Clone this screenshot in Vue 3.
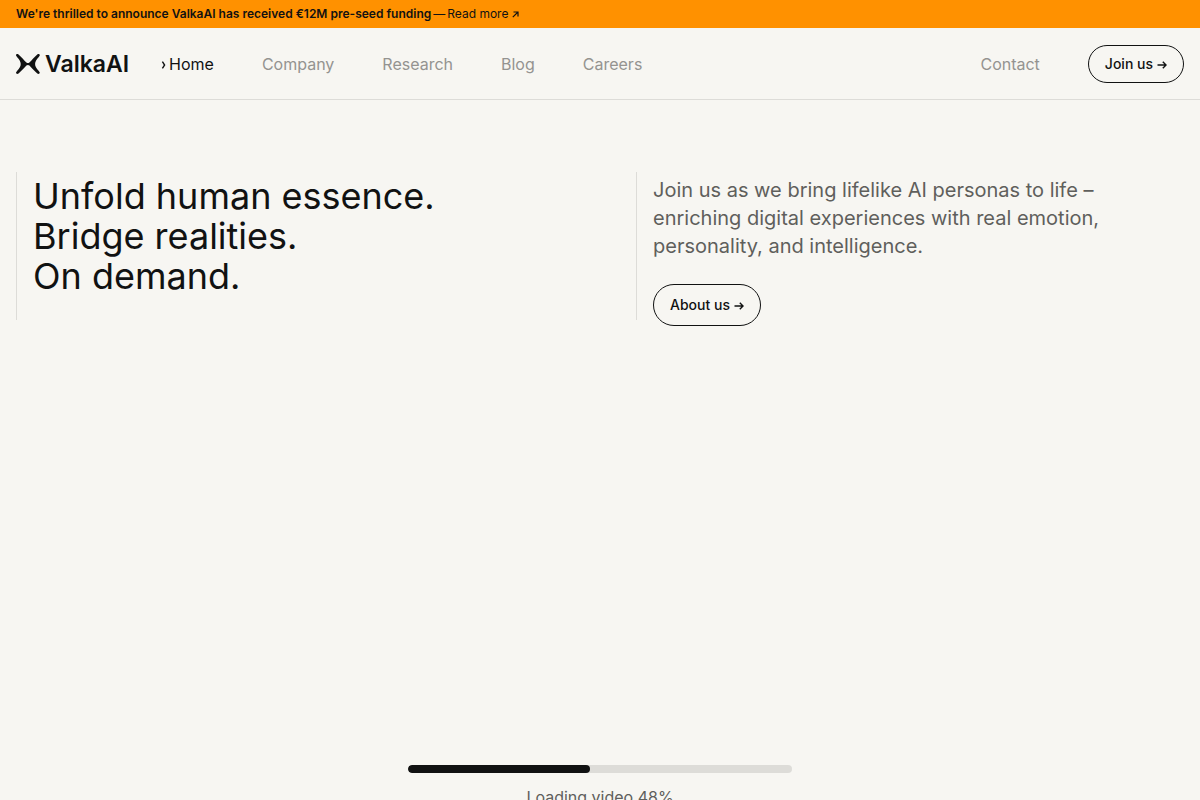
<script setup>
const links = [
  { label: 'Home', current: true },
  { label: 'Company' },
  { label: 'Research' },
  { label: 'Blog' },
  { label: 'Careers' },
]
const progress = 47.5
</script>

<template>
  <div class="page">
    <aside class="banner">
      <strong>We're thrilled to announce ValkaAI has received €12M pre-seed funding</strong>
      <span class="dash">—</span>
      <a href="#news">Read more
        <svg class="diag" viewBox="0 0 7 7" aria-hidden="true"><path d="M.8 6.2 6 1M1.5 1H6v4.5" /></svg>
      </a>
    </aside>

    <header class="header">
      <a class="logo" href="#home" aria-label="ValkaAI">
        <svg class="mark" viewBox="0 0 24 20" aria-hidden="true">
          <path d="M0 1.4C0 .1 1.4 -.4 2.5.5C5.4 3 8 6.2 10.4 8.6Q11.9 9.6 13.4 8.6C15.8 6.2 18.4 3 21.3.5C22.4-.4 23.8.1 23.8 1.4L22.6 3.2C17.9 8 17.9 12 22.6 16.8L23.8 18.6C23.8 19.9 22.4 20.4 21.3 19.5C18.4 17 15.8 13.8 13.4 11.4Q11.9 10.4 10.4 11.4C8 13.8 5.4 17 2.5 19.5C1.4 20.4 0 19.9 0 18.6L1.2 16.8C5.9 12 5.9 8 1.2 3.2Z" />
        </svg>
        <span>ValkaAI</span>
      </a>
      <nav class="nav" aria-label="Main">
        <a v-for="link in links" :key="link.label" :href="'#' + link.label.toLowerCase()" :class="{ current: link.current }">
          <svg v-if="link.current" class="chevron" viewBox="0 0 5 8" aria-hidden="true"><path d="M1.4.6 3.6 4 1.4 7.4" /></svg>{{ link.label }}
        </a>
      </nav>
      <a class="contact" href="#contact">Contact</a>
      <button class="pill small" type="button">
        Join us
        <svg class="arrow" viewBox="0 0 10 8" aria-hidden="true"><path d="M.5 4H9M5.8.8 9 4 5.8 7.2" /></svg>
      </button>
    </header>

    <main>
      <section class="hero">
        <div class="column">
          <h1>Unfold human essence.<br />Bridge realities.<br />On demand.</h1>
        </div>
        <div class="column">
          <p>Join us as we bring lifelike AI personas to life –<br />enriching digital experiences with real emotion,<br />personality, and intelligence.</p>
          <button class="pill" type="button">
            About us
            <svg class="arrow" viewBox="0 0 10 8" aria-hidden="true"><path d="M.5 4H9M5.8.8 9 4 5.8 7.2" /></svg>
          </button>
        </div>
      </section>

      <section class="video" aria-label="Video">
        <div class="loader">
          <div class="track" role="progressbar" aria-label="Loading video" :aria-valuenow="progress" aria-valuemin="0" aria-valuemax="100">
            <div class="fill" :style="{ width: progress + '%' }"></div>
          </div>
          <div class="status">Loading video {{ Math.round(progress) }}%</div>
        </div>
      </section>
    </main>
  </div>
</template>

<style>
html, body { background: #f7f6f2; }
</style>

<style scoped>
* { box-sizing: border-box; }
.page {
  height: 100vh;
  overflow: hidden;
  background: #f7f6f2;
  color: #111212;
  font-family: Inter, "Liberation Sans", sans-serif;
  font-size: 16px;
  line-height: 24px;
}
a { color: inherit; text-decoration: none; }
svg { fill: none; stroke: currentColor; flex: none; }
.banner {
  display: flex;
  align-items: center;
  gap: 2px;
  padding: 4px 16px;
  background: #ff9100;
  font-size: 12px;
  line-height: 20px;
}
.banner strong { font-weight: 600; }
.diag { width: 7px; height: 7px; stroke-width: 1.2; }
.header {
  display: flex;
  align-items: center;
  height: 72px;
  padding: 0 16px;
  border-bottom: 1px solid #dddcd8;
}
.logo {
  display: flex;
  align-items: center;
  gap: 5px;
  margin-right: 32px;
  font-weight: 600;
  font-size: 23px;
}
.mark { width: 24px; height: 20px; fill: currentColor; stroke: none; }
.nav { display: flex; gap: 48px; flex: 1; color: #949390; }
.current { display: flex; align-items: center; gap: 3px; color: #111212; }
.chevron { width: 5px; height: 8px; margin-top: 2px; stroke-width: 1.4; }
.contact { margin-right: 48px; color: #949390; }
.pill {
  display: inline-flex;
  align-items: center;
  gap: 4px;
  height: 42px;
  padding: 0 16px;
  border: 1px solid #111212;
  border-radius: 21px;
  background: transparent;
  color: inherit;
  font: 500 14px/20px Inter, sans-serif;
}
.small { height: 38px; }
.arrow { width: 10px; height: 8px; margin-top: 2px; stroke-width: 1.4; }
.hero {
  display: grid;
  grid-template-columns: 1fr 1fr;
  gap: 72px;
  padding: 72px 16px;
}
.column {
  height: 148px;
  padding: 4px 0 0 16px;
  border-left: 1px solid #dddcd8;
}
h1 { margin: 0; font-size: 36px; line-height: 40px; font-weight: 400; }
p { margin: 0 0 24px; color: #5f5f5c; font-size: 20px; line-height: 28px; }
.video {
  display: flex;
  align-items: center;
  justify-content: center;
  height: 100vh;
  padding-bottom: 10px;
}
.loader { display: grid; gap: 12px; width: 32%; text-align: center; }
.track { height: 8px; border-radius: 4px; background: #dddcd8; overflow: hidden; }
.fill { height: 100%; border-radius: 4px; background: #111212; }
.status { color: #5f5f5c; }
</style>
